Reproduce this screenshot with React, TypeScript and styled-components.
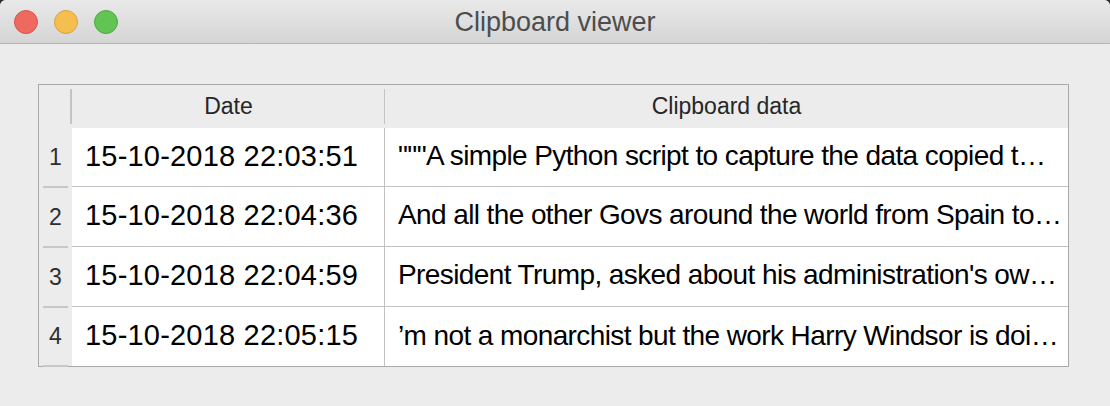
import { FC } from "react";
import styled, { createGlobalStyle } from "styled-components";

const rows = [
  {
    date: "15-10-2018 22:03:51",
    data: '"""A simple Python script to capture the data copied t…',
  },
  {
    date: "15-10-2018 22:04:36",
    data: "And all the other Govs around the world from Spain to…",
  },
  {
    date: "15-10-2018 22:04:59",
    data: "President Trump, asked about his administration's ow…",
  },
  {
    date: "15-10-2018 22:05:15",
    data: "’m not a monarchist but the work Harry Windsor is doi…",
  },
];

const App: FC = () => {
  return (
    <>
      <GlobalStyle />
      <Window>
        <TitleBar>
          <Lights>
            <Light color="#ee6a5f" edge="#d9544b" />
            <Light color="#f5bf4f" edge="#d8a343" />
            <Light color="#61c454" edge="#51a843" />
          </Lights>
          <Title>Clipboard viewer</Title>
        </TitleBar>
        <Content>
          <Table>
            <Corner />
            <HeadCell divider>Date</HeadCell>
            <HeadCell>Clipboard data</HeadCell>
            {rows.map((row, i) => (
              <Row key={row.date}>
                <RowNumber>{i + 1}</RowNumber>
                <Cell last={i === rows.length - 1} date>
                  {row.date}
                </Cell>
                <Cell last={i === rows.length - 1}>{row.data}</Cell>
              </Row>
            ))}
          </Table>
        </Content>
      </Window>
    </>
  );
};

export default App;

const GlobalStyle = createGlobalStyle`
  html, body {
    margin: 0;
    padding: 0;
    background: #2d2d2d;
    overflow: hidden;
  }
  body {
    font-family: "Liberation Sans", Arial, sans-serif;
  }
`;

const Window = styled.div`
  display: flex;
  flex-direction: column;
  width: 1110px;
  height: 406px;
  background: #ececec;
  border-radius: 6px 6px 0 0;
  overflow: hidden;
`;

const TitleBar = styled.div`
  position: relative;
  display: flex;
  align-items: center;
  justify-content: center;
  height: 43px;
  flex-shrink: 0;
  background: linear-gradient(#e9e9e9, #d5d5d5);
  border-bottom: 1px solid #b4b4b4;
`;

const Lights = styled.div`
  position: absolute;
  left: 14px;
  top: 10px;
  display: flex;
  gap: 16px;
`;

const Light = styled.span<{ color: string; edge: string }>`
  width: 22px;
  height: 22px;
  border-radius: 50%;
  background: ${props => props.color};
  border: 1px solid ${props => props.edge};
`;

const Title = styled.div`
  font-size: 27px;
  color: #4d4d4d;
  line-height: 1;
  margin-top: 1px;
`;

const Content = styled.div`
  flex: 1;
  padding: 40px 41px 39px 38px;
`;

const Table = styled.div`
  display: grid;
  grid-template-columns: 33px 313px 1fr;
  grid-template-rows: 43px 59px 60px 60px 59px;
  border: 1px solid #a9a9a9;
  background: #ececec;
`;

const Row = styled.div`
  display: contents;
`;

const Corner = styled.div`
  position: relative;

  &::after {
    content: "";
    position: absolute;
    right: 0;
    top: 4px;
    bottom: 4px;
    width: 2px;
    background: #c4c4c4;
  }
`;

const HeadCell = styled.div<{ divider?: boolean }>`
  position: relative;
  display: flex;
  align-items: center;
  justify-content: center;
  font-size: 23px;
  color: #262626;

  ${props =>
    props.divider &&
    `
    &::after {
      content: "";
      position: absolute;
      right: 0;
      top: 4px;
      bottom: 4px;
      width: 1px;
      background: #c4c4c4;
    }
  `}
`;

const RowNumber = styled.div`
  position: relative;
  display: flex;
  align-items: center;
  justify-content: center;
  font-size: 23px;
  color: #2e2e2e;

  &::after {
    content: "";
    position: absolute;
    left: 4px;
    right: 4px;
    bottom: -1px;
    height: 2px;
    background: #c8c8c8;
  }
`;

const Cell = styled.div<{ last?: boolean; date?: boolean }>`
  display: block;
  min-width: 0;
  padding: 0 0 2px 13px;
  background: #fff;
  font-size: ${props => (props.date ? "29px" : "28px")};
  letter-spacing: ${props => (props.date ? "0.2px" : "-0.6px")};
  line-height: ${props => (props.last ? "57px" : "56px")};
  color: #000;
  white-space: nowrap;
  overflow: hidden;
  text-overflow: clip;
  border-bottom: ${props => (props.last ? "none" : "1px solid #c2c2c2")};
  border-right: ${props => (props.date ? "1px solid #c2c2c2" : "none")};
`;
